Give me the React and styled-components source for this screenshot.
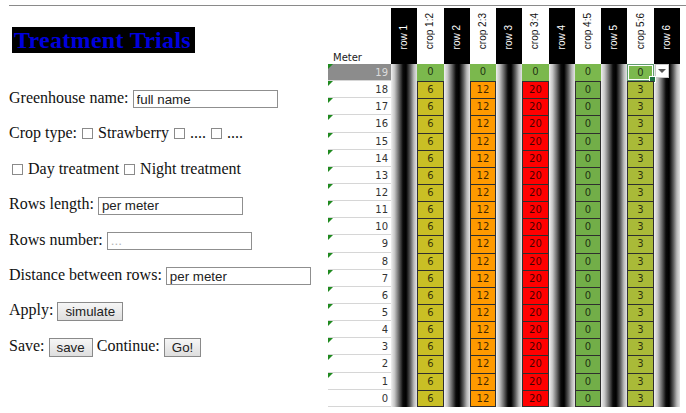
import React from 'react';
import styled, { createGlobalStyle } from 'styled-components';

const crops = [
  { label: 'crop 1:2', color: '#c9bf25', value: 6 },
  { label: 'crop 2:3', color: '#ff9a00', value: 12 },
  { label: 'crop 3:4', color: '#ff0000', value: 20 },
  { label: 'crop 4:5', color: '#72ae48', value: 0 },
  { label: 'crop 5:6', color: '#a9ba38', value: 3 },
];
const meters = Array.from({ length: 20 }, (_, i) => 19 - i);

export default function App() {
  return (
    <>
      <GlobalStyle />
      <Page>
        <Rule />
        <Main>
          <Panel>
            <Title>Treatment Trials</Title>
            <Form>
              <Row>
                Greenhouse name: <Field defaultValue="full name" />
              </Row>
              <Row>
                Crop type:<Check />Strawberry<Check />....<Check />....
              </Row>
              <Row>
                <Check $lead />Day treatment<Check />Night treatment
              </Row>
              <Row>
                Rows length: <Field defaultValue="per meter" />
              </Row>
              <Row>
                Rows number: <Field placeholder="..." />
              </Row>
              <Row>
                Distance between rows: <Field defaultValue="per meter" />
              </Row>
              <Row>
                Apply: <Button>simulate</Button>
              </Row>
              <Row>
                Save: <Button>save</Button> Continue: <Button>Go!</Button>
              </Row>
            </Form>
          </Panel>

          <Sheet>
            <MeterHead>Meter</MeterHead>
            {Array.from({ length: 11 }, (_, i) => {
              const isRow = i % 2 === 0;
              const label = isRow ? `row ${i / 2 + 1}` : crops[(i - 1) / 2].label;
              return (
                <HeadCell key={label} $col={i + 2} $dark={isRow}>
                  <Vertical>{label}</Vertical>
                </HeadCell>
              );
            })}

            {meters.map((m, r) => (
              <MeterCell key={m} $row={r + 2} $active={m === 19} $flag={m > 0}>
                {m}
              </MeterCell>
            ))}

            {Array.from({ length: 6 }, (_, i) => (
              <Stripe key={i} $col={2 + i * 2} />
            ))}

            {crops.map((c, ci) =>
              meters.map((m, r) => {
                const top = m === 19;
                const active = top && ci === crops.length - 1;
                return (
                  <CropCell
                    key={c.label + m}
                    $col={3 + ci * 2}
                    $row={r + 2}
                    $color={top ? '#7bb84d' : c.color}
                    $top={top}
                    $last={m === 0}
                    $active={active}
                  >
                    {top ? 0 : c.value}
                    {active && (
                      <DropButton>
                        <Caret />
                      </DropButton>
                    )}
                  </CropCell>
                );
              })
            )}
          </Sheet>
        </Main>
      </Page>
    </>
  );
}

const GlobalStyle = createGlobalStyle`
  * { box-sizing: border-box; }
  body {
    margin: 0;
    background: #fff;
    font-family: "Liberation Serif", "Times New Roman", serif;
    font-size: 16px;
    color: #111;
  }
`;

const Page = styled.div`
  width: 686px;
  height: 413px;
  overflow: hidden;
  padding-top: 5px;
`;

const Rule = styled.div`
  height: 1px;
  margin-left: 9px;
  background: #8a8a8a;
`;

const Main = styled.div`
  display: flex;
  align-items: flex-start;
`;

const Panel = styled.div`
  width: 328px;
  flex: none;
`;

const Title = styled.h2`
  display: inline-block;
  margin: 21px 0 0 12px;
  padding: 0 4px 0 2px;
  background: #000;
  color: #0000dd;
  font-size: 24px;
  font-weight: bold;
  line-height: 26px;
  letter-spacing: 0.3px;
`;

const Form = styled.div`
  margin-top: 27px;
  padding-left: 9px;
`;

const Row = styled.div`
  height: 35.4px;
  line-height: 35.4px;
  white-space: nowrap;
`;

const Field = styled.input`
  width: 145px;
  height: 18px;
  padding: 1px 3px;
  border: 1px solid #8f8f8f;
  font-family: "Liberation Sans", Arial, sans-serif;
  font-size: 13.33px;
  color: #222;
  vertical-align: middle;
  &::placeholder {
    color: #b5b5b5;
  }
`;

const Check = styled.span`
  display: inline-block;
  width: 11px;
  height: 11px;
  margin: 0 5px 0 ${(p) => (p.$lead ? '3px' : '5px')};
  border: 1px solid #8a8a8a;
  background: #fff;
  vertical-align: middle;
  position: relative;
  top: -1px;
`;

const Button = styled.button`
  height: 19px;
  padding: 0 7px;
  border: 1px solid #8a8a8a;
  background: linear-gradient(#f6f6f6, #dedede);
  font-family: "Liberation Sans", Arial, sans-serif;
  font-size: 13.33px;
  color: #222;
  vertical-align: middle;
`;

const Sheet = styled.div`
  margin-top: 2px;
  display: grid;
  grid-template-columns: 63px repeat(11, 26.27px);
  grid-template-rows: 56px repeat(20, 17.15px);
`;

const MeterHead = styled.div`
  grid-column: 1;
  grid-row: 1;
  display: flex;
  align-items: flex-end;
  padding: 0 0 1px 5px;
  font-family: "DejaVu Sans", Verdana, sans-serif;
  font-size: 10px;
  color: #222;
`;

const HeadCell = styled.div`
  grid-column: ${(p) => p.$col};
  grid-row: 1;
  display: flex;
  align-items: flex-end;
  justify-content: center;
  padding-bottom: 15px;
  background: ${(p) => (p.$dark ? '#000' : '#fff')};
  color: ${(p) => (p.$dark ? '#fff' : '#111')};
`;

const Vertical = styled.span`
  writing-mode: vertical-rl;
  transform: rotate(180deg);
  font-family: "Liberation Sans", Arial, sans-serif;
  font-size: 10px;
  line-height: 1;
`;

const MeterCell = styled.div`
  grid-column: 1;
  grid-row: ${(p) => p.$row};
  position: relative;
  padding-right: 3px;
  border-bottom: 1px solid #d6d6d6;
  background: ${(p) => (p.$active ? '#8c8c8c' : '#fff')};
  color: ${(p) => (p.$active ? '#dcdcdc' : '#333')};
  text-align: right;
  font-family: "DejaVu Sans", Verdana, sans-serif;
  font-size: 10px;
  line-height: 17px;

  &::before {
    content: '';
    display: ${(p) => (p.$flag ? 'block' : 'none')};
    position: absolute;
    top: 0;
    left: 0;
    border-top: 5px solid #1f8a1f;
    border-right: 5px solid transparent;
  }
`;

const Stripe = styled.div`
  grid-column: ${(p) => p.$col};
  grid-row: 2 / span 20;
  background: linear-gradient(
    to right,
    #f0f0f0 0%,
    #c4c4c4 14%,
    #6a6a6a 30%,
    #0a0a0a 46%,
    #000 58%,
    #5a5a5a 74%,
    #b8b8b8 88%,
    #e4e4e4 100%
  );
`;

const CropCell = styled.div`
  grid-column: ${(p) => p.$col};
  grid-row: ${(p) => p.$row};
  position: relative;
  background: ${(p) => p.$color};
  border: ${(p) => (p.$top ? 'none' : '1px solid #2e2e2e')};
  border-bottom-width: ${(p) => (p.$last ? '1px' : '0')};
  color: rgba(0, 0, 0, 0.75);
  text-align: center;
  font-family: "DejaVu Sans", Verdana, sans-serif;
  font-size: 10px;
  line-height: 16px;
  ${(p) =>
    p.$active &&
    `
    border: 1px solid #5f9c70;
    box-shadow: inset 0 0 0 1px #fff;
    line-height: 15px;
    &::after {
      content: '';
      position: absolute;
      right: -3px;
      bottom: -3px;
      width: 5px;
      height: 5px;
      background: #217346;
      border: 1px solid #fff;
    }
  `}
`;

const DropButton = styled.span`
  position: absolute;
  top: -1px;
  left: calc(100% + 2px);
  width: 14px;
  height: 14px;
  background: #fff;
  border: 1px solid #c8c8c8;
  display: flex;
  align-items: center;
  justify-content: center;
`;

const Caret = styled.span`
  width: 0;
  height: 0;
  border-left: 4px solid transparent;
  border-right: 4px solid transparent;
  border-top: 4px solid #555;
`;
